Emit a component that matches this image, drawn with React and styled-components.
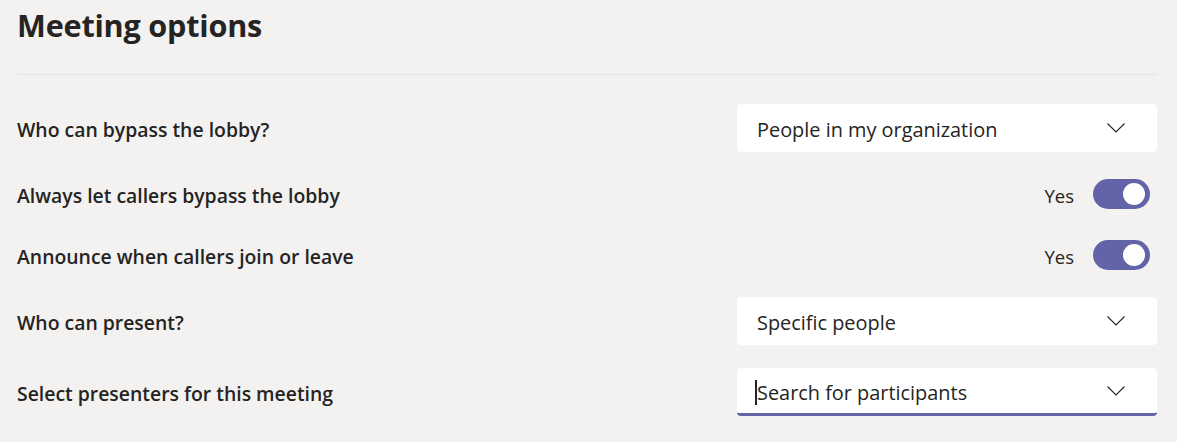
import React from "react";
import styled, { createGlobalStyle } from "styled-components";

const Global = createGlobalStyle`
  html, body { margin: 0; padding: 0; background: #f3f2f1; }
  body { font-family: "Open Sans", "Noto Sans", sans-serif; color: #252423; }
`;

const Page = styled.div`
  padding: 0 20px 0 17px;
`;

const Header = styled.header`
  padding-top: 4px;
  height: 75px;
  border-bottom: 1px solid #e6e4e2;
  box-sizing: border-box;
`;

const Title = styled.h1`
  margin: 0;
  font-size: 30.6px;
  font-weight: 700;
  line-height: 42px;
  letter-spacing: -0.2px;
`;

const List = styled.div`
  display: flex;
  flex-direction: column;
`;

const Row = styled.div`
  display: flex;
  align-items: center;
  justify-content: space-between;
  margin-top: ${(p) => p.$gap}px;
`;

const Label = styled.div`
  font-size: 19.4px;
  font-weight: 600;
  padding-top: 2px;
`;

const Dropdown = styled.div`
  width: 420px;
  height: 48px;
  box-sizing: border-box;
  background: #fff;
  border-radius: 4px;
  display: flex;
  align-items: center;
  padding: 0 32px 0 20px;
  border-bottom: ${(p) => (p.$focused ? "3px solid #6264a7" : "none")};
  padding-top: ${(p) => (p.$focused ? "1px" : "0")};
`;

const Value = styled.div`
  flex: 1;
  font-size: 19.9px;
  font-weight: 400;
  color: #252423;
  display: flex;
  align-items: center;
  padding-top: 2px;
`;

const Caret = styled.span`
  display: inline-block;
  width: 2px;
  height: 25px;
  background: #252423;
  margin-left: -2px;
`;

const ToggleGroup = styled.div`
  display: flex;
  align-items: center;
  gap: 19px;
  margin-right: 7px;
`;

const ToggleText = styled.span`
  font-size: 18.5px;
  font-weight: 400;
  padding-top: 2px;
`;

const Switch = styled.div`
  width: 57px;
  height: 30px;
  border-radius: 15px;
  background: #6264a7;
  position: relative;
  &::after {
    content: "";
    position: absolute;
    right: 5px;
    top: 4px;
    width: 22px;
    height: 22px;
    border-radius: 50%;
    background: #fff;
  }
`;

const Chevron = () => (
  <svg width="18" height="10" viewBox="0 0 18 10" fill="none">
    <path d="M0.5 0.5 L9 9 L17.5 0.5" stroke="#252423" strokeWidth="1.1" />
  </svg>
);

export default function App() {
  return (
    <>
      <Global />
      <Page>
        <Header>
          <Title>Meeting options</Title>
        </Header>
        <List>
          <Row $gap={29}>
            <Label>Who can bypass the lobby?</Label>
            <Dropdown>
              <Value>People in my organization</Value>
              <Chevron />
            </Dropdown>
          </Row>
          <Row $gap={27}>
            <Label>Always let callers bypass the lobby</Label>
            <ToggleGroup>
              <ToggleText>Yes</ToggleText>
              <Switch />
            </ToggleGroup>
          </Row>
          <Row $gap={31}>
            <Label>Announce when callers join or leave</Label>
            <ToggleGroup>
              <ToggleText>Yes</ToggleText>
              <Switch />
            </ToggleGroup>
          </Row>
          <Row $gap={27}>
            <Label>Who can present?</Label>
            <Dropdown>
              <Value>Specific people</Value>
              <Chevron />
            </Dropdown>
          </Row>
          <Row $gap={23}>
            <Label>Select presenters for this meeting</Label>
            <Dropdown $focused>
              <Value>
                <Caret />
                Search for participants
              </Value>
              <Chevron />
            </Dropdown>
          </Row>
        </List>
      </Page>
    </>
  );
}
